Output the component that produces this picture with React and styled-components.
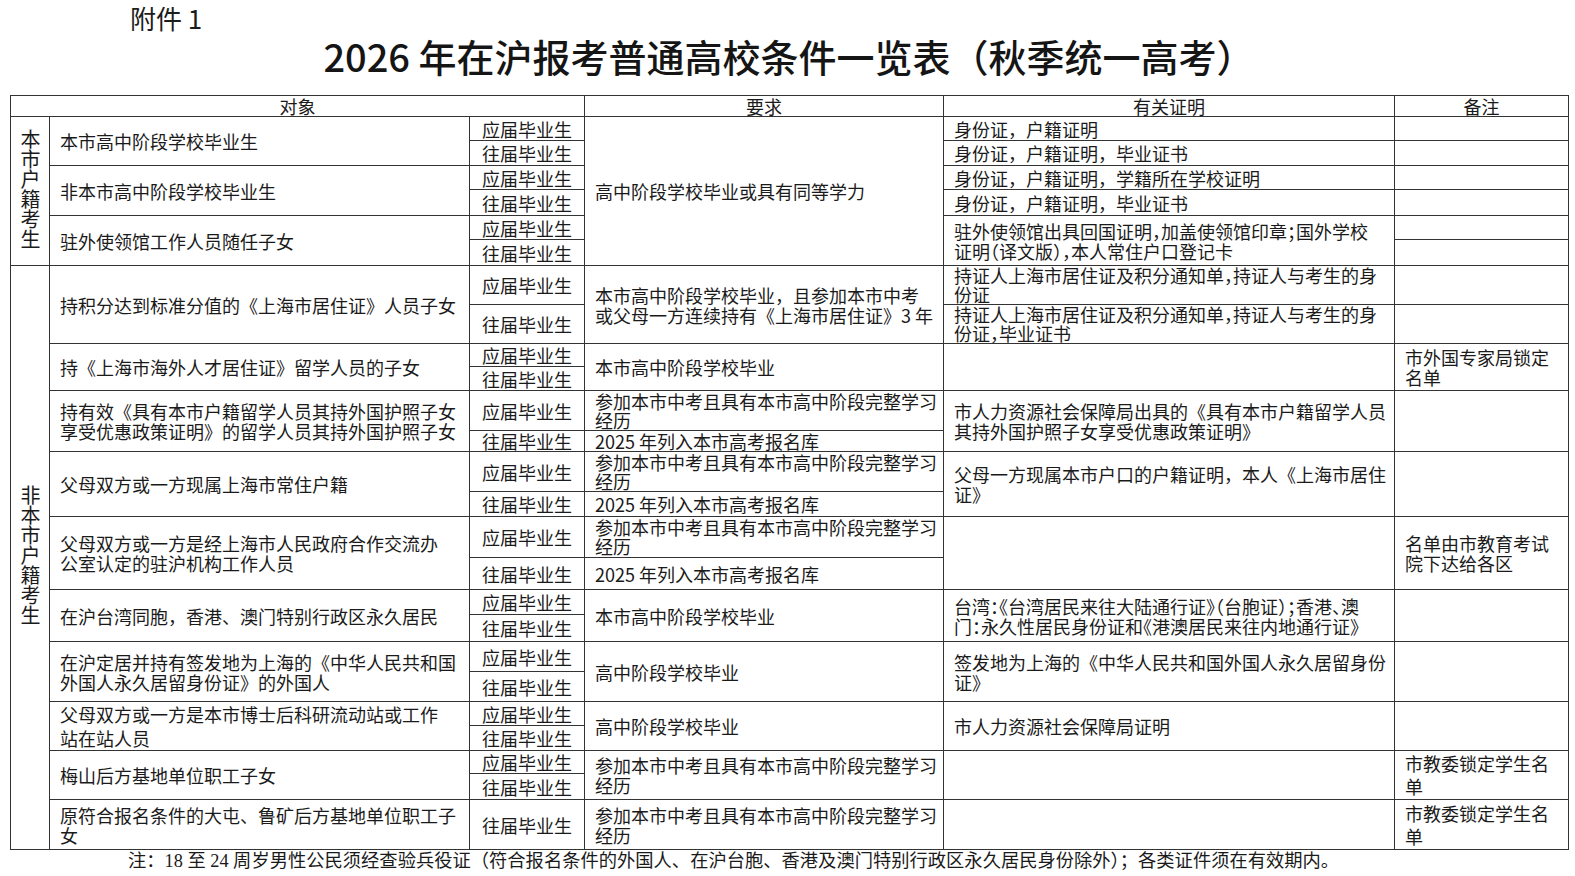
import React from 'react';
import styled, { createGlobalStyle } from 'styled-components';

const GlobalStyle = createGlobalStyle`
  html, body {
    margin: 0;
    padding: 0;
    background: #ffffff;
    overflow: hidden;
  }
  body {
    font-family: "Noto Sans CJK SC", "Noto Sans", sans-serif;
    color: #1a1a1a;
  }
`;

const Page = styled.div`
  width: 1575px;
  height: 876px;
  box-sizing: border-box;
  padding: 0 7px 0 10px;
  overflow: hidden;
  display: flex;
  flex-direction: column;
`;

const Attachment = styled.div`
  padding-left: 120px;
  font-size: 26px;
  line-height: 36px;
  color: #1c1c1c;
`;

const Title = styled.h1`
  margin: -3px 0 16px;
  padding: 0;
  text-align: center;
  font-size: 38px;
  line-height: 46px;
  font-weight: 500;
  color: #151515;
`;

const Sheet = styled.table`
  width: 1558px;
  flex: none;
  border-collapse: collapse;
  table-layout: fixed;
  font-size: 18px;
`;

const Row = styled.tr`
  height: ${p => p.$h}px;
`;

const HeadCell = styled.th`
  border: 1px solid #333;
  padding: 0;
  font-weight: 400;
  font-size: 18px;
  line-height: 19px;
  text-align: center;
  vertical-align: middle;
`;

const Cell = styled.td`
  border: 1px solid #333;
  padding: 0 2px 0 10px;
  line-height: ${p => p.$lh || 20}px;
  vertical-align: middle;
  white-space: nowrap;
  text-align: left;
  font-feature-settings: ${p => (p.$tight ? '"halt"' : 'normal')};
`;

const StageCell = styled.td`
  border: 1px solid #333;
  padding: 0;
  line-height: 20px;
  text-align: center;
  vertical-align: middle;
  white-space: nowrap;
`;

const GroupCell = styled.td`
  border: 1px solid #333;
  padding: 0;
  text-align: center;
  vertical-align: middle;
`;

const VerticalLabel = styled.span`
  display: inline-block;
  writing-mode: vertical-rl;
  text-orientation: upright;
  font-size: 20px;
  line-height: 20px;
`;

const Footnote = styled.div`
  padding-left: 118px;
  font-family: "Liberation Serif", "Noto Sans CJK SC", serif;
  font-size: 18.3px;
  line-height: 22px;
  color: #1a1a1a;
`;

const Y = '应届毕业生';
const W = '往届毕业生';
const STUDY = <>参加本市中考且具有本市高中阶段完整学习<br />经历</>;
const POOL = '2025 年列入本市高考报名库';

export default function App() {
  return (
    <Page>
      <GlobalStyle />
      <Attachment>附件 1</Attachment>
      <Title>2026 年在沪报考普通高校条件一览表（秋季统一高考）</Title>
      <Sheet>
        <colgroup>
          <col style={{ width: 39 }} />
          <col style={{ width: 420 }} />
          <col style={{ width: 115 }} />
          <col style={{ width: 359 }} />
          <col style={{ width: 451 }} />
          <col style={{ width: 174 }} />
        </colgroup>
        <tbody>
          <Row $h={21}>
            <HeadCell colSpan={3}>对象</HeadCell>
            <HeadCell>要求</HeadCell>
            <HeadCell>有关证明</HeadCell>
            <HeadCell>备注</HeadCell>
          </Row>

          {/* 本市户籍考生 */}
          <Row $h={24}>
            <GroupCell rowSpan={6}><VerticalLabel>本市户籍考生</VerticalLabel></GroupCell>
            <Cell rowSpan={2}>本市高中阶段学校毕业生</Cell>
            <StageCell>{Y}</StageCell>
            <Cell rowSpan={6}>高中阶段学校毕业或具有同等学力</Cell>
            <Cell>身份证，户籍证明</Cell>
            <Cell />
          </Row>
          <Row $h={25}>
            <StageCell>{W}</StageCell>
            <Cell>身份证，户籍证明，毕业证书</Cell>
            <Cell />
          </Row>
          <Row $h={24}>
            <Cell rowSpan={2}>非本市高中阶段学校毕业生</Cell>
            <StageCell>{Y}</StageCell>
            <Cell>身份证，户籍证明，学籍所在学校证明</Cell>
            <Cell />
          </Row>
          <Row $h={26}>
            <StageCell>{W}</StageCell>
            <Cell>身份证，户籍证明，毕业证书</Cell>
            <Cell />
          </Row>
          <Row $h={24}>
            <Cell rowSpan={2}>驻外使领馆工作人员随任子女</Cell>
            <StageCell>{Y}</StageCell>
            <Cell rowSpan={2} $lh={20} $tight>
              驻外使领馆出具回国证明，加盖使领馆印章；国外学校<br />证明（译文版），本人常住户口登记卡
            </Cell>
            <Cell />
          </Row>
          <Row $h={26}>
            <StageCell>{W}</StageCell>
            <Cell />
          </Row>

          {/* 非本市户籍考生 */}
          <Row $h={39}>
            <GroupCell rowSpan={19}><VerticalLabel>非本市户籍考生</VerticalLabel></GroupCell>
            <Cell rowSpan={2}>持积分达到标准分值的《上海市居住证》人员子女</Cell>
            <StageCell>{Y}</StageCell>
            <Cell rowSpan={2} $lh={20}>
              本市高中阶段学校毕业，且参加本市中考<br />或父母一方连续持有《上海市居住证》3 年
            </Cell>
            <Cell $lh={19} $tight>持证人上海市居住证及积分通知单，持证人与考生的身<br />份证</Cell>
            <Cell />
          </Row>
          <Row $h={39}>
            <StageCell>{W}</StageCell>
            <Cell $lh={19} $tight>持证人上海市居住证及积分通知单，持证人与考生的身<br />份证，毕业证书</Cell>
            <Cell />
          </Row>
          <Row $h={23}>
            <Cell rowSpan={2}>持《上海市海外人才居住证》留学人员的子女</Cell>
            <StageCell>{Y}</StageCell>
            <Cell rowSpan={2}>本市高中阶段学校毕业</Cell>
            <Cell rowSpan={2} />
            <Cell rowSpan={2}>市外国专家局锁定<br />名单</Cell>
          </Row>
          <Row $h={24}>
            <StageCell>{W}</StageCell>
          </Row>
          <Row $h={40}>
            <Cell rowSpan={2} $lh={20}>
              持有效《具有本市户籍留学人员其持外国护照子女<br />享受优惠政策证明》的留学人员其持外国护照子女
            </Cell>
            <StageCell>{Y}</StageCell>
            <Cell $lh={19}>{STUDY}</Cell>
            <Cell rowSpan={2} $lh={20}>
              市人力资源社会保障局出具的《具有本市户籍留学人员<br />其持外国护照子女享受优惠政策证明》
            </Cell>
            <Cell rowSpan={2} />
          </Row>
          <Row $h={20}>
            <StageCell>{W}</StageCell>
            <Cell $lh={19}>{POOL}</Cell>
          </Row>
          <Row $h={40}>
            <Cell rowSpan={2}>父母双方或一方现属上海市常住户籍</Cell>
            <StageCell>{Y}</StageCell>
            <Cell $lh={19}>{STUDY}</Cell>
            <Cell rowSpan={2}>父母一方现属本市户口的户籍证明，本人《上海市居住<br />证》</Cell>
            <Cell rowSpan={2} />
          </Row>
          <Row $h={25}>
            <StageCell>{W}</StageCell>
            <Cell>{POOL}</Cell>
          </Row>
          <Row $h={41}>
            <Cell rowSpan={2}>
              父母双方或一方是经上海市人民政府合作交流办<br />公室认定的驻沪机构工作人员
            </Cell>
            <StageCell>{Y}</StageCell>
            <Cell $lh={19}>{STUDY}</Cell>
            <Cell rowSpan={2} />
            <Cell rowSpan={2}>名单由市教育考试<br />院下达给各区</Cell>
          </Row>
          <Row $h={32}>
            <StageCell>{W}</StageCell>
            <Cell>{POOL}</Cell>
          </Row>
          <Row $h={25}>
            <Cell rowSpan={2}>在沪台湾同胞，香港、澳门特别行政区永久居民</Cell>
            <StageCell>{Y}</StageCell>
            <Cell rowSpan={2}>本市高中阶段学校毕业</Cell>
            <Cell rowSpan={2} $lh={20} $tight>
              台湾：《台湾居民来往大陆通行证》（台胞证）；香港、澳<br />门：永久性居民身份证和《港澳居民来往内地通行证》
            </Cell>
            <Cell rowSpan={2} />
          </Row>
          <Row $h={27}>
            <StageCell>{W}</StageCell>
          </Row>
          <Row $h={30}>
            <Cell rowSpan={2}>
              在沪定居并持有签发地为上海的《中华人民共和国<br />外国人永久居留身份证》的外国人
            </Cell>
            <StageCell>{Y}</StageCell>
            <Cell rowSpan={2}>高中阶段学校毕业</Cell>
            <Cell rowSpan={2}>签发地为上海的《中华人民共和国外国人永久居留身份<br />证》</Cell>
            <Cell rowSpan={2} />
          </Row>
          <Row $h={30}>
            <StageCell>{W}</StageCell>
          </Row>
          <Row $h={24}>
            <Cell rowSpan={2} $lh={24}>
              父母双方或一方是本市博士后科研流动站或工作<br />站在站人员
            </Cell>
            <StageCell>{Y}</StageCell>
            <Cell rowSpan={2}>高中阶段学校毕业</Cell>
            <Cell rowSpan={2}>市人力资源社会保障局证明</Cell>
            <Cell rowSpan={2} />
          </Row>
          <Row $h={25}>
            <StageCell>{W}</StageCell>
          </Row>
          <Row $h={23}>
            <Cell rowSpan={2}>梅山后方基地单位职工子女</Cell>
            <StageCell>{Y}</StageCell>
            <Cell rowSpan={2}>{STUDY}</Cell>
            <Cell rowSpan={2} />
            <Cell rowSpan={2} $lh={23}>市教委锁定学生名<br />单</Cell>
          </Row>
          <Row $h={26}>
            <StageCell>{W}</StageCell>
          </Row>
          <Row $h={50}>
            <Cell>原符合报名条件的大屯、鲁矿后方基地单位职工子<br />女</Cell>
            <StageCell>{W}</StageCell>
            <Cell>{STUDY}</Cell>
            <Cell />
            <Cell $lh={23}>市教委锁定学生名<br />单</Cell>
          </Row>
        </tbody>
      </Sheet>
      <Footnote>
        注：18 至 24 周岁男性公民须经查验兵役证（符合报名条件的外国人、在沪台胞、香港及澳门特别行政区永久居民身份除外）；各类证件须在有效期内。
      </Footnote>
    </Page>
  );
}
